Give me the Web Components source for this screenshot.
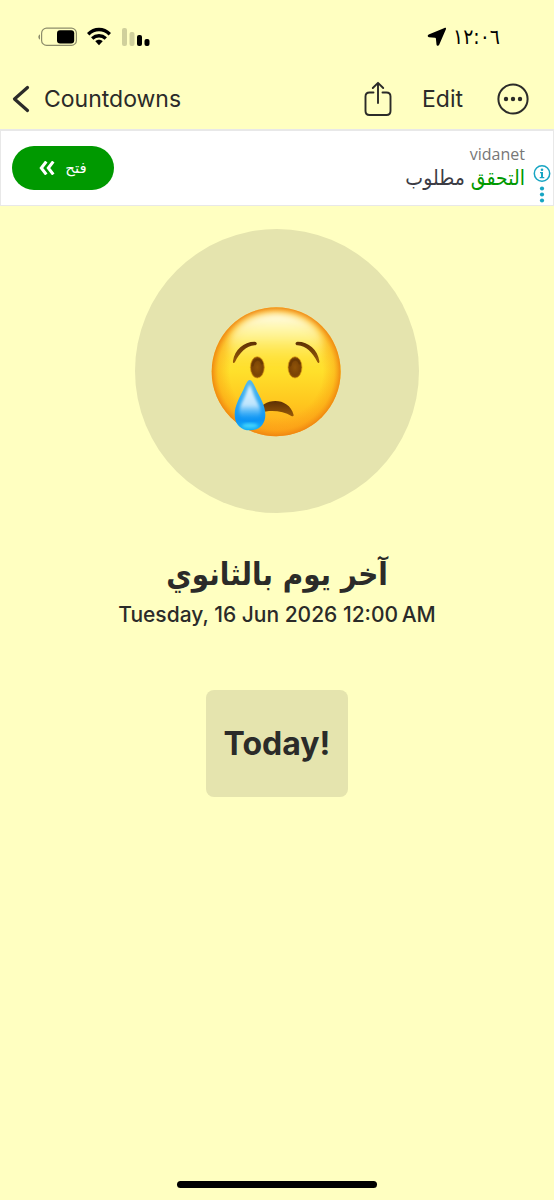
<!DOCTYPE html>
<html lang="en">
<head>
<meta charset="UTF-8">
<meta name="viewport" content="width=device-width, initial-scale=1">
<title>Countdowns</title>
<style>
    :root {
        --page: #ffffc1;
        --shade: #e5e4ae;
        --ink: #2b2b29;
        --green: #009900;
        --arabic: "DejaVu Sans Condensed", "DejaVu Sans", sans-serif;
    }

    body {
        margin: 0;
        background: var(--page);
        color: var(--ink);
        font-family: Inter, "DejaVu Sans", sans-serif;
    }
</style>
</head>
<body>
<countdown-app>
    <status-bar slot="top" time="١٢:٠٦"></status-bar>
    <nav-bar slot="top" back="Countdowns"></nav-bar>
    <ad-banner slot="top">
        <span slot="brand">vidanet</span>
        <span slot="highlight">التحقق</span>
        <span slot="text">مطلوب</span>
        <span slot="action">فتح</span>
    </ad-banner>
    <countdown-card>
        <crying-face slot="icon"></crying-face>
        <span slot="title" lang="ar" dir="rtl">آخر يوم بالثانوي</span>
        <span slot="date">Tuesday, 16 Jun 2026 12:00&#8201;AM</span>
        <span slot="remaining">Today!</span>
    </countdown-card>
</countdown-app>

<script>
/**
 * <countdown-app>
 * Full height column: bars on top, card below, home indicator at the bottom.
 */
class CountdownApp extends HTMLElement {
    constructor() {
        super();
        this.attachShadow({ mode: 'open' });
        this.shadowRoot.innerHTML = `
<style>
    :host {
        display: flex;
        flex-direction: column;
        min-height: 100vh;
    }

    main {
        flex: 1;
    }

    .home {
        width: 36%;
        height: 7px;
        margin: 0 auto 12px;
        border-radius: 4px;
        background: #000;
    }
</style>
<slot name="top"></slot>
<main><slot></slot></main>
<div class="home"></div>
        `;
    }
}

/**
 * <status-bar time="">
 */
class StatusBar extends HTMLElement {
    constructor() {
        super();
        this.attachShadow({ mode: 'open' });
        this.shadowRoot.innerHTML = `
<style>
    :host {
        display: flex;
        justify-content: space-between;
        align-items: center;
        height: 74px;
        padding: 0 54px 0 38px;
        box-sizing: border-box;
        color: #000;
    }

    .group {
        display: flex;
        align-items: center;
        gap: 10px;
    }

    .time {
        gap: 6px;
        font-family: var(--arabic);
        font-size: 21px;
        font-weight: 500;
        line-height: 28px;
    }

    svg {
        display: block;
    }
</style>
<div class="group">
    <svg width="39" height="20" viewBox="0 0 39 20">
        <path d="M2 7.4C-.2 8-.2 12 2 12.600z" fill="#8d8d6b"/>
        <rect x="3.600" y="1.200" width="34.800" height="17.200" rx="5" fill="none" stroke="#8d8d6b" stroke-width="1.200"/>
        <rect x="19" y="3.300" width="17.200" height="13.200" rx="3" fill="#000"/>
    </svg>
    <svg width="24" height="20" viewBox="0 0 24 20">
        <g fill="none" stroke="#000" stroke-width="3.400">
            <path d="M1.200 7.200C7.500 1 16.500 1 22.800 7.200"/>
            <path d="M5.200 11.500C9.200 7.800 14.800 7.800 18.800 11.500"/>
        </g>
        <path d="M8.300 14.300C10.300 12.300 13.700 12.300 15.700 14.300L12 18.200z"/>
    </svg>
    <svg width="30" height="20" viewBox="0 0 30 20">
        <rect x="1" y="1" width="5" height="18" rx="2" fill="#d0d09c"/>
        <rect x="8.500" y="5" width="5" height="14" rx="2" fill="#d0d09c"/>
        <rect x="16" y="8" width="5" height="11" rx="2"/>
        <rect x="23.500" y="12" width="5" height="7" rx="2"/>
    </svg>
</div>
<div class="group time">
    <svg width="20" height="20" viewBox="0 0 20 20">
        <path d="M17.500 .9C18.700.5 19.400 1.200 18.900 2.300L12.200 17.800C11.600 19.200 9.700 19.200 9.500 17.600L8.900 11.600C8.800 11 8.600 10.800 8 10.700L2 10.300C.4 10.100.2 8.200 1.700 7.600z"/>
    </svg>
    <span id="time"></span>
</div>
        `;
    }

    connectedCallback() {
        this.shadowRoot.getElementById('time').textContent = this.getAttribute('time');
    }
}

/**
 * <nav-bar back="">
 */
class NavBar extends HTMLElement {
    constructor() {
        super();
        this.attachShadow({ mode: 'open' });
        this.shadowRoot.innerHTML = `
<style>
    :host {
        display: block;
    }

    nav {
        display: flex;
        align-items: center;
        height: 55px;
        padding: 0 25px 6px 12px;
        box-sizing: border-box;
    }

    a, button {
        display: flex;
        align-items: center;
        padding: 0;
        border: 0;
        background: none;
        color: inherit;
        font: inherit;
        font-size: 23px;
        line-height: 28px;
        text-decoration: none;
        cursor: pointer;
    }

    a {
        gap: 14px;
        margin-right: auto;
    }

    .actions {
        display: flex;
        align-items: center;
        gap: 30px;
    }

    .more {
        margin-left: 4px;
    }

    svg {
        display: block;
        fill: none;
        stroke: currentColor;
    }
</style>
<nav>
    <a href="#">
        <svg width="18" height="28" viewBox="0 0 18 28" stroke-width="3.200" stroke-linecap="round" stroke-linejoin="round">
            <path d="M15.500 2.500L2.500 14L15.500 25.500"/>
        </svg>
        <span id="back"></span>
    </a>
    <div class="actions">
        <button type="button" aria-label="Share">
            <svg width="28" height="36" viewBox="0 0 28 36" stroke-width="1.900" stroke-linecap="round" stroke-linejoin="round">
                <path d="M9.500 11.500H5.500Q1.500 11.500 1.500 15.500V30Q1.500 34 5.500 34H22.500Q26.500 34 26.500 30V15.500Q26.500 11.500 22.500 11.500H18.500"/>
                <path d="M14 22V2M8.800 7L14 1.800L19.200 7"/>
            </svg>
        </button>
        <button type="button">Edit</button>
        <button type="button" class="more" aria-label="More">
            <svg width="32" height="32" viewBox="0 0 32 32" stroke-width="2">
                <circle cx="16" cy="16" r="14.600"/>
                <g fill="currentColor" stroke="none">
                    <circle cx="9" cy="16" r="2.200"/>
                    <circle cx="16" cy="16" r="2.200"/>
                    <circle cx="23" cy="16" r="2.200"/>
                </g>
            </svg>
        </button>
    </div>
</nav>
        `;
    }

    connectedCallback() {
        this.shadowRoot.getElementById('back').textContent = this.getAttribute('back');
    }
}

/**
 * <ad-banner>
 * Slots: brand, highlight, text, action.
 */
class AdBanner extends HTMLElement {
    constructor() {
        super();
        this.attachShadow({ mode: 'open' });
        this.shadowRoot.innerHTML = `
<style>
    :host {
        display: flex;
        justify-content: space-between;
        align-items: center;
        height: 77px;
        padding: 0 2px 0 11px;
        box-sizing: border-box;
        border: 2px solid #e8e8e8;
        border-width: 2px 1px 1px;
        background: #fff;
    }

    .open {
        display: flex;
        justify-content: center;
        align-items: center;
        gap: 10px;
        width: 102px;
        height: 44px;
        padding: 0;
        border: 0;
        border-radius: 22px;
        background: var(--green);
        color: #fff;
        font-family: "DejaVu Sans", sans-serif;
        font-size: 15px;
        cursor: pointer;
    }

    .side {
        display: flex;
        align-items: center;
        align-self: stretch;
        gap: 8px;
    }

    .copy {
        display: flex;
        flex-direction: column;
        align-items: flex-end;
    }

    .brand {
        color: #777;
        font-family: "Open Sans", sans-serif;
        font-size: 16px;
        line-height: 20px;
    }

    .line {
        color: #3c3c44;
        font-family: var(--arabic);
        font-size: 21px;
        line-height: 28px;
    }

    .highlight {
        color: var(--green);
    }

    .info {
        align-self: flex-end;
        padding: 0;
        border: 0;
        background: none;
        cursor: pointer;
    }

    svg {
        display: block;
    }
</style>
<button type="button" class="open">
    <svg width="16" height="14" viewBox="0 0 16 14" fill="none" stroke="#fff" stroke-width="3">
        <path d="M7.300.5L2.300 7L7.300 13.500M14.300.5L9.300 7L14.300 13.500"/>
    </svg>
    <slot name="action"></slot>
</button>
<div class="side">
    <div class="copy">
        <div class="brand"><slot name="brand"></slot></div>
        <div class="line" dir="rtl"><span class="highlight"><slot name="highlight"></slot></span> <slot name="text"></slot></div>
    </div>
    <button type="button" class="info" aria-label="Ad options">
        <svg width="18" height="40" viewBox="0 0 18 40" fill="#18a5c3">
            <circle cx="9" cy="8.500" r="7.700" fill="none" stroke="#18a5c3" stroke-width="1.500"/>
            <circle cx="9" cy="4.700" r="1.300"/>
            <path d="M7 7H10V12H11.300V13.200H6.700V12H8V8.200H7z"/>
            <circle cx="9" cy="23.500" r="2.100"/>
            <circle cx="9" cy="29.500" r="2.100"/>
            <circle cx="9" cy="35.500" r="2.100"/>
        </svg>
    </button>
</div>
        `;
    }
}

/**
 * <crying-face>
 */
class CryingFace extends HTMLElement {
    constructor() {
        super();
        this.attachShadow({ mode: 'open' });
        this.shadowRoot.innerHTML = `
<style>
    :host {
        display: block;
        width: 130px;
    }

    svg {
        display: block;
        width: 100%;
        overflow: visible;
    }
</style>
<svg viewBox="48 43 390 390" role="img" aria-label="Crying face">
    <defs>
        <linearGradient id="skin" x1="0" y1="0" x2="0" y2="1">
            <stop offset="0" stop-color="#ffe35a"/>
            <stop offset=".5" stop-color="#ffe02b"/>
            <stop offset=".75" stop-color="#ffc61e"/>
            <stop offset="1" stop-color="#ffa21c"/>
        </linearGradient>
        <radialGradient id="rim" cx=".5" cy=".5" r=".5">
            <stop offset=".72" stop-color="#f99b12" stop-opacity="0"/>
            <stop offset=".9" stop-color="#f99b12" stop-opacity=".45"/>
            <stop offset="1" stop-color="#ee8410" stop-opacity=".95"/>
        </radialGradient>
        <linearGradient id="shine" x1="0" y1="0" x2="0" y2="1">
            <stop offset="0" stop-color="#fffff2" stop-opacity=".98"/>
            <stop offset=".35" stop-color="#fffbb0" stop-opacity=".7"/>
            <stop offset=".8" stop-color="#ffe338" stop-opacity="0"/>
        </linearGradient>
        <linearGradient id="brow" x1="0" y1="0" x2="0" y2="1">
            <stop offset="0" stop-color="#5d3004"/>
            <stop offset="1" stop-color="#985a08"/>
        </linearGradient>
        <radialGradient id="eye" cx=".5" cy=".5" r=".5">
            <stop offset="0" stop-color="#8e5308"/>
            <stop offset=".75" stop-color="#7a4305"/>
            <stop offset="1" stop-color="#8c5206"/>
        </radialGradient>
        <linearGradient id="tear" x1="0" y1="0" x2="0" y2="1">
            <stop offset="0" stop-color="#55b9ea"/>
            <stop offset=".45" stop-color="#2fa9f2"/>
            <stop offset=".8" stop-color="#0d94f4"/>
            <stop offset="1" stop-color="#16b3f5"/>
        </linearGradient>
        <linearGradient id="gleam" x1="0" y1="0" x2="0" y2="1">
            <stop offset="0" stop-color="#fff" stop-opacity=".85"/>
            <stop offset=".6" stop-color="#d6efff" stop-opacity=".85"/>
            <stop offset="1" stop-color="#55bdfa" stop-opacity="0"/>
        </linearGradient>
        <filter id="soft" x="-20%" y="-20%" width="140%" height="140%">
            <feGaussianBlur stdDeviation="4"/>
        </filter>
        <filter id="haze" x="-20%" y="-20%" width="140%" height="140%">
            <feGaussianBlur stdDeviation="9"/>
        </filter>
    </defs>
    <circle cx="240.500" cy="240" r="193.500" fill="url(#skin)"/>
    <circle cx="240.500" cy="240" r="193.500" fill="url(#rim)"/>
    <ellipse cx="240" cy="164" rx="142" ry="100" fill="url(#shine)" filter="url(#haze)"/>
    <g fill="url(#brow)">
        <path d="M111 208C116 174 143 150 176 150C185 151 184 160 176 161C151 163 131 183 117 211C114 216 110 215 111 208z"/>
        <path d="M370 208C365 174 338 150 305 150C296 151 297 160 305 161C330 163 350 183 364 211C367 216 371 215 370 208z"/>
    </g>
    <g fill="url(#eye)" stroke="#d99a10" stroke-width="2">
        <ellipse cx="184" cy="227" rx="21" ry="32"/>
        <ellipse cx="297" cy="227" rx="21" ry="32"/>
    </g>
    <g fill="none" stroke="#5e3203" stroke-width="7" stroke-linecap="round" opacity=".55">
        <path d="M170 221C173 201 193 198 198 215"/>
        <path d="M283 221C286 201 306 198 311 215"/>
    </g>
    <path d="M180 366C201 316 278 314 293 370C293 374 290 375 286 373C262 357 222 354 193 363z" fill="url(#brow)"/>
    <path d="M161 265C154 265 149 279 143 292C132 316 116 340 116 369C116 399 136 416 162 416C188 416 208 399 208 369C208 340 191 316 180 292C174 279 168 265 161 265z" fill="url(#tear)"/>
    <path d="M161 278C155 289 150 307 143 321C134 339 129 349 131 367C135 386 189 386 193 367C195 349 188 339 179 321C172 307 167 289 161 278z" fill="url(#gleam)" filter="url(#soft)"/>
    <ellipse cx="162" cy="402" rx="24" ry="7" fill="#54e4ff" opacity=".75" filter="url(#soft)"/>
</svg>
        `;
    }
}

/**
 * <countdown-card>
 * Slots: icon, title, date, remaining.
 */
class CountdownCard extends HTMLElement {
    constructor() {
        super();
        this.attachShadow({ mode: 'open' });
        this.shadowRoot.innerHTML = `
<style>
    :host {
        display: flex;
        flex-direction: column;
        align-items: center;
        padding: 23px 24px;
        text-align: center;
    }

    .icon {
        display: flex;
        justify-content: center;
        align-items: center;
        width: 284px;
        height: 284px;
        border-radius: 50%;
        background: var(--shade);
    }

    h1 {
        margin: 36px 0 0;
        font-family: var(--arabic);
        font-size: 31px;
        font-weight: 700;
        line-height: 50px;
    }

    .date {
        margin: 2px 0 0;
        font-size: 21px;
        font-weight: 500;
        line-height: 28px;
    }

    .remaining {
        margin: 61px 0 0;
        padding: 32px 18px 31px;
        border-radius: 8px;
        background: var(--shade);
        font-size: 32px;
        font-weight: 700;
        line-height: 44px;
    }
</style>
<div class="icon"><slot name="icon"></slot></div>
<h1><slot name="title"></slot></h1>
<p class="date"><slot name="date"></slot></p>
<p class="remaining"><slot name="remaining"></slot></p>
        `;
    }
}

customElements.define('countdown-app', CountdownApp);
customElements.define('status-bar', StatusBar);
customElements.define('nav-bar', NavBar);
customElements.define('ad-banner', AdBanner);
customElements.define('crying-face', CryingFace);
customElements.define('countdown-card', CountdownCard);
</script>
</body>
</html>
